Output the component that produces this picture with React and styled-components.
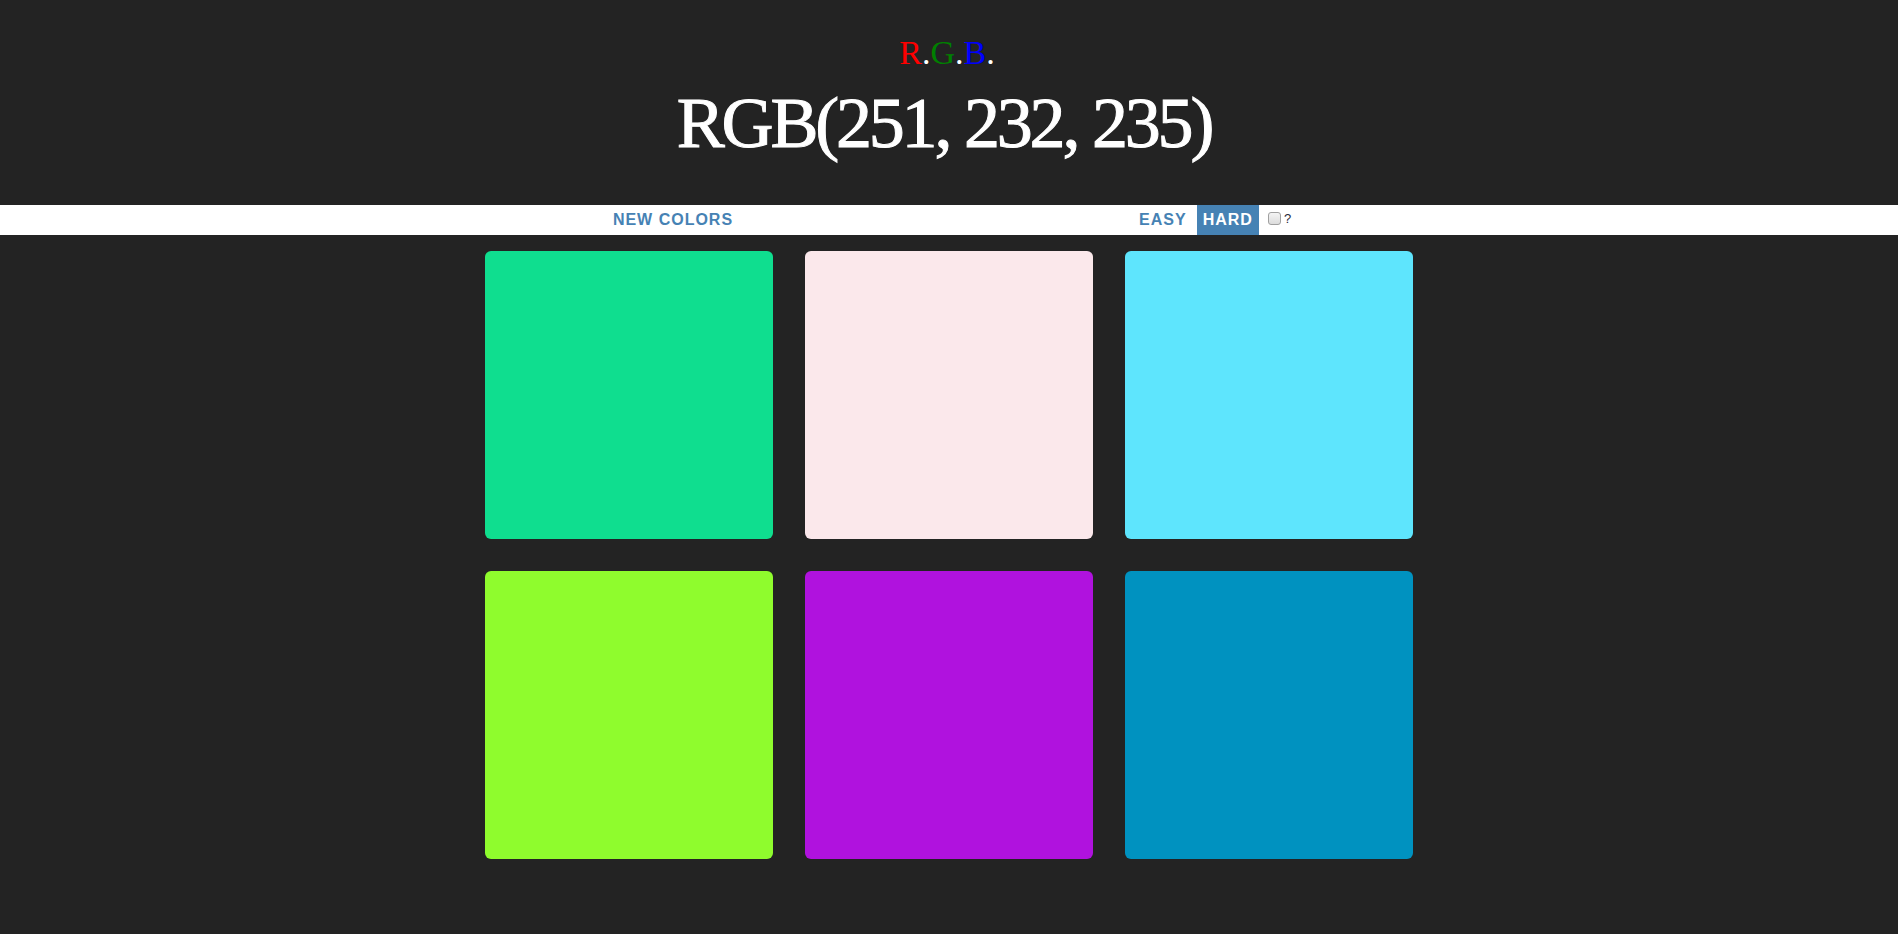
import React from "react";
import styled, { createGlobalStyle } from "styled-components";

const Global = createGlobalStyle`
  html, body { margin: 0; padding: 0; }
  body {
    background: #232323;
    font-family: "Liberation Sans", Arial, sans-serif;
    min-height: 934px;
  }
`;

const Header = styled.header`
  display: flex;
  flex-direction: column;
  align-items: center;
  height: 205px;
  padding-top: 33px;
  box-sizing: border-box;
  color: #fff;
  font-family: "Liberation Serif", "Times New Roman", serif;
`;

const Brand = styled.div`
  font-size: 34px;
  line-height: 40px;
  margin-right: 4px;
`;

const Letter = styled.span`
  color: ${(p) => p.$c};
`;

const Target = styled.h1`
  margin: 10px 10px 0 0;
  font-size: 72px;
  line-height: 80px;
  font-weight: 400;
  letter-spacing: -3.2px;
  -webkit-text-stroke: 1px #fff;
`;

const Stripe = styled.nav`
  display: flex;
  justify-content: center;
  align-items: stretch;
  height: 30px;
  background: #fff;
  gap: 4px;
`;

const Btn = styled.button`
  border: none;
  margin: 0;
  padding: 0 6px;
  background: ${(p) => (p.$active ? "steelblue" : "#fff")};
  color: ${(p) => (p.$active ? "#fff" : "steelblue")};
  font-family: "Liberation Sans", Arial, sans-serif;
  font-size: 16px;
  font-weight: 700;
  letter-spacing: 1px;
  text-transform: uppercase;
  cursor: pointer;
  outline: none;
`;

const Message = styled.span`
  display: inline-block;
  width: 386px;
`;

const Hint = styled.label`
  display: flex;
  align-items: center;
  margin-left: 5px;
  font-size: 13px;
  color: #2a2a3a;
  font-family: "Liberation Sans", Arial, sans-serif;
  padding-bottom: 3px;
`;

const Check = styled.input`
  appearance: none;
  width: 13px;
  height: 13px;
  margin: 0 3px 0 0;
  border: 1px solid #a0a0a0;
  border-radius: 3px;
  background: linear-gradient(#f4f4f4, #dcdcdc);
  box-sizing: border-box;
`;

const Grid = styled.main`
  width: 960px;
  margin: 0 auto;
  display: flex;
  flex-wrap: wrap;
`;

const Square = styled.div`
  width: 288px;
  height: 288px;
  margin: 16px;
  border-radius: 6px;
  background: ${(p) => p.$bg};
`;

const colors = [
  "rgb(15, 222, 143)",
  "rgb(251, 232, 235)",
  "rgb(94, 229, 253)",
  "rgb(143, 252, 45)",
  "rgb(176, 18, 222)",
  "rgb(0, 146, 192)",
];

export default function App() {
  return (
    <>
      <Global />
      <Header>
        <Brand>
          <Letter $c="#ff0000">R</Letter>.<Letter $c="#008000">G</Letter>.
          <Letter $c="#0000ff">B</Letter>.
        </Brand>
        <Target>RGB(251, 232, 235)</Target>
      </Header>
      <Stripe>
        <Btn>New Colors</Btn>
        <Message />
        <Btn>Easy</Btn>
        <Btn $active>Hard</Btn>
        <Hint>
          <Check type="checkbox" />?
        </Hint>
      </Stripe>
      <Grid>
        {colors.map((c, i) => (
          <Square key={i} $bg={c} />
        ))}
      </Grid>
    </>
  );
}
